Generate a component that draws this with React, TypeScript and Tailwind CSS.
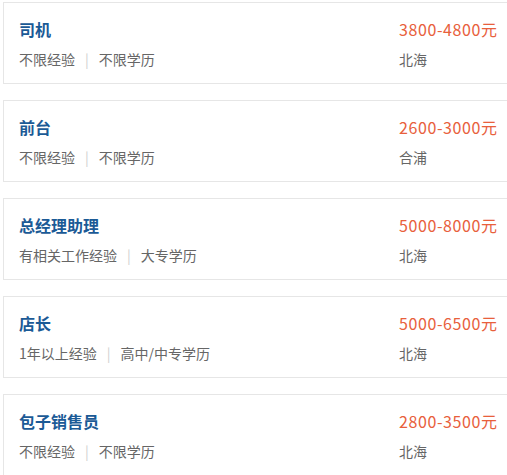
import React from "react";

const jobs = [
  { title: "司机", exp: "不限经验", edu: "不限学历", salary: "3800-4800元", loc: "北海" },
  { title: "前台", exp: "不限经验", edu: "不限学历", salary: "2600-3000元", loc: "合浦" },
  { title: "总经理助理", exp: "有相关工作经验", edu: "大专学历", salary: "5000-8000元", loc: "北海" },
  { title: "店长", exp: "1年以上经验", edu: "高中/中专学历", salary: "5000-6500元", loc: "北海" },
  { title: "包子销售员", exp: "不限经验", edu: "不限学历", salary: "2800-3500元", loc: "北海" },
];

export default function App() {
  return (
    <div
      className="w-[507px] h-[475px] overflow-hidden bg-white"
      style={{ fontFamily: '"Noto Sans CJK SC", "Noto Sans", sans-serif' }}
    >
      <div className="flex flex-col gap-4 pt-[2px] pl-[3px]">
        {jobs.map((j) => (
          <div
            key={j.title}
            className="flex w-[540px] h-[82px] shrink-0 border border-[#e6e6e6] bg-white pt-[14px] pl-[15px]"
          >
            <div className="w-[380px] flex flex-col">
              <div className="text-[16px] leading-[24px] font-bold text-[#1b5a96]">{j.title}</div>
              <div className="mt-2 text-[14px] leading-[20px] text-[#666666] flex items-center">
                <span>{j.exp}</span>
                <span className="mx-[10px] text-[#cfcfcf]">|</span>
                <span>{j.edu}</span>
              </div>
            </div>
            <div className="flex flex-col">
              <div className="text-[16px] leading-[24px] tracking-[0.6px] text-[#e8603c]">{j.salary}</div>
              <div className="mt-2 text-[14px] leading-[20px] text-[#666666]">{j.loc}</div>
            </div>
          </div>
        ))}
      </div>
    </div>
  );
}
